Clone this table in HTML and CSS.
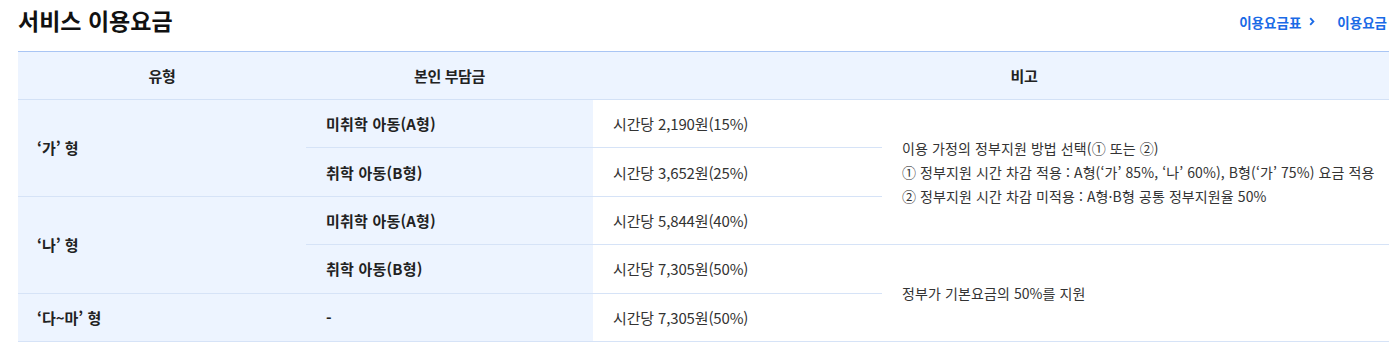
FILE: index.html
```html
<!DOCTYPE html>
<html lang="ko">
<head>
<meta charset="utf-8">
<title>서비스 이용요금</title>
<link rel="stylesheet" href="styles.css">
</head>
<body>
<div class="viewport">
  <div class="page">
    <div class="top">
      <h2 class="title">서비스 이용요금</h2>
      <div class="links">
        <a class="link" href="#">이용요금표<svg class="chev" width="6" height="9" viewBox="0 0 6 9"><path d="M1.2 1.2 L4.4 4.5 L1.2 7.8" fill="none" stroke="#1a6ae6" stroke-width="1.8"/></svg></a>
        <a class="link" href="#">이용요금</a>
      </div>
    </div>
    <table class="fee">
      <colgroup>
        <col class="c1"><col class="c2"><col class="c3"><col class="c4">
      </colgroup>
      <thead>
        <tr>
          <th>유형</th>
          <th>본인 부담금</th>
          <th colspan="2">비고</th>
        </tr>
      </thead>
      <tbody>
        <tr>
          <td class="tint type" rowspan="2">‘가’ 형</td>
          <td class="tint label">미취학 아동(A형)</td>
          <td class="val">시간당 2,190원(15%)</td>
          <td class="note" rowspan="3">이용 가정의 정부지원 방법 선택(① 또는 ②)<br>① 정부지원 시간 차감 적용 : A형(‘가’ 85%, ‘나’ 60%), B형(‘가’ 75%) 요금 적용<br>② 정부지원 시간 차감 미적용 : A형·B형 공통 정부지원율 50%</td>
        </tr>
        <tr>
          <td class="tint label">취학 아동(B형)</td>
          <td class="val">시간당 3,652원(25%)</td>
        </tr>
        <tr>
          <td class="tint type" rowspan="2">‘나’ 형</td>
          <td class="tint label">미취학 아동(A형)</td>
          <td class="val">시간당 5,844원(40%)</td>
        </tr>
        <tr>
          <td class="tint label">취학 아동(B형)</td>
          <td class="val">시간당 7,305원(50%)</td>
          <td class="note" rowspan="2">정부가 기본요금의 50%를 지원</td>
        </tr>
        <tr>
          <td class="tint type">‘다~마’ 형</td>
          <td class="tint label">-</td>
          <td class="val">시간당 7,305원(50%)</td>
        </tr>
      </tbody>
    </table>
  </div>
</div>
</body>
</html>
```
FILE: styles.css
```css
html, body {
  margin: 0;
  padding: 0;
  background: #fff;
}
body {
  font-family: "Noto Sans CJK KR", "Noto Sans", sans-serif;
  color: #222;
}
.viewport {
  width: 100%;
  overflow: hidden;
}
.page {
  width: 1437px;
  padding-left: 18px;
}
.top {
  display: flex;
  align-items: center;
  justify-content: space-between;
  width: 1371px;
  height: 51px;
  box-sizing: border-box;
}
.title {
  margin: 0 0 11px;
  font-size: 23px;
  font-weight: 700;
  letter-spacing: 0;
  color: #111;
  line-height: 30px;
}
.links {
  display: flex;
  gap: 22px;
  margin-bottom: 8px;
  margin-right: 2px;
}
.link {
  display: flex;
  align-items: center;
  color: #1a6ae6;
  font-size: 13.5px;
  font-weight: 600;
  text-decoration: none;
}
.chev {
  margin-left: 8px;
}
.fee {
  width: 1437px;
  border-collapse: collapse;
  table-layout: fixed;
}
.c1 { width: 288px; }
.c2 { width: 287px; }
.c3 { width: 289px; }
.c4 { width: 573px; }
.fee thead th {
  background: #edf4ff;
  border-top: 1px solid #a9c5f4;
  border-bottom: 1px solid #d3e1f6;
  height: 47px;
  padding: 0;
  font-size: 15px;
  letter-spacing: -0.4px;
  font-weight: 600;
  color: #222;
  text-align: center;
}
.fee td {
  height: 48.4px;
  box-sizing: border-box;
  padding: 0 20px;
  border-bottom: 1px solid #d6e3f7;
  vertical-align: middle;
  color: #333;
  font-size: 15px;
  letter-spacing: -0.15px;
}
.fee td.tint {
  background: #edf4ff;
}
.fee td.type {
  padding-left: 19px;
  font-weight: 700;
  letter-spacing: 0;
  color: #222;
}
.fee td.label {
  font-weight: 700;
  font-size: 15px;
  letter-spacing: 0.2px;
  color: #222;
}
.fee td.note {
  line-height: 24px;
  font-size: 14px;
  letter-spacing: 0.1px;
}
```
